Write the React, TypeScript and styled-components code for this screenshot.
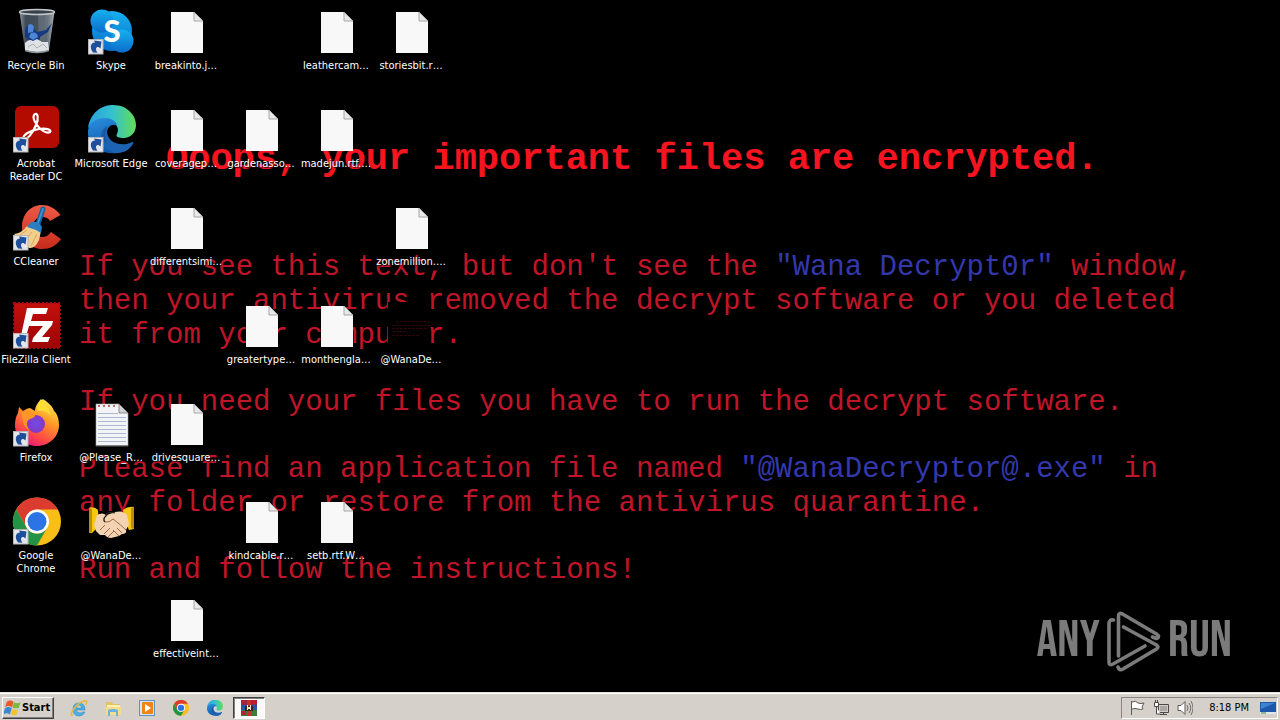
import React from "react";
import styled, { createGlobalStyle, css } from "styled-components";

const UI_FONT = `Tahoma, "DejaVu Sans Condensed", "DejaVu Sans", sans-serif`;
const FACE = "#d5d0c9";

const GlobalStyle = createGlobalStyle`
  * { box-sizing: border-box; }
  body { margin: 0; background: #000; font-family: ${UI_FONT}; }
  button { font: inherit; color: inherit; padding: 0; margin: 0; border: 0; background: none; }
`;

const Screen = styled.div`
  display: flex;
  flex-direction: column;
  min-height: 100vh;
  background: #000;
`;

const Desktop = styled.main`
  flex: 1;
  display: grid;
  grid-template-columns: minmax(0, 1fr);
  overflow: hidden;

  & > * { grid-area: 1 / 1; }
`;

const Wallpaper = styled.article`
  display: flex;
  flex-direction: column;
  gap: 33px;
  padding: 136px 0 0 79px;
  font-family: "Courier New", "Liberation Mono", monospace;
  white-space: nowrap;
`;

const Headline = styled.h1`
  margin: 0;
  padding: 0 0 36px 87px;
  font-size: 37px;
  line-height: 46px;
  font-weight: 700;
  color: #f5141f;
`;

const Paragraph = styled.p`
  margin: 0;
  font-size: 29px;
  line-height: 34px;
  color: #c01528;
`;

const Quoted = styled.span`
  color: #3338ac;
`;

const IconGrid = styled.section`
  z-index: 1;
  display: grid;
  grid-template-columns: repeat(6, 74px);
  grid-auto-rows: 84px;
  gap: 14px 1px;
  padding-top: 8px;
  align-content: start;
`;

const IconTile = styled.button<{ $col: number; $row: number }>`
  grid-column: ${(p) => p.$col};
  grid-row: ${(p) => p.$row};
  display: flex;
  flex-direction: column;
  align-items: center;
  align-self: start;
  gap: 3px;

  svg { display: block; overflow: visible; }
`;

const IconLabel = styled.span`
  padding-right: 2px;
  font-size: 11px;
  line-height: 13px;
  color: #fff;
  white-space: pre;
  text-align: center;
  text-shadow: 1px 1px 1px #000;
`;

const Watermark = styled.div`
  justify-self: end;
  align-self: end;
  display: flex;
  align-items: center;
  gap: 6px;
  padding: 0 48px 20px 0;
  color: #7b7b7b;
  font-family: "Bebas Neue", "Roboto Condensed", "Open Sans Condensed", "DejaVu Sans Condensed", sans-serif;
  font-size: 52px;
  line-height: 62px;
`;

const Taskbar = styled.footer`
  display: flex;
  align-items: center;
  height: 28px;
  padding: 2px 2px 0 2px;
  background: ${FACE};
  border-top: 1px solid #e4e0da;
  box-shadow: inset 0 1px 0 #fff;
`;

const StartButton = styled.button`
  && {
    display: flex;
    align-items: center;
    gap: 1px;
    width: 52px;
    height: 22px;
    padding-left: 1px;
    border: 1px solid;
    border-color: #fff #404040 #404040 #fff;
    box-shadow: inset -1px -1px 0 #808080;
    background: ${FACE};
    color: #000;
    font-size: 11px;
    font-weight: 700;
  }
`;

const QuickLaunch = styled.nav`
  display: flex;
  gap: 2px;
  margin-left: 9px;
`;

const TaskButton = styled.button<{ $active?: boolean }>`
  && {
    display: grid;
    place-items: center;
    width: 32px;
    height: 22px;
    ${(p) =>
      p.$active &&
      css`
        background: #fbfaf9;
        border: 1px solid;
        border-color: #404040 #fff #fff #404040;
        box-shadow: inset 1px 1px 0 #808080;
      `}
  }
`;

const Tray = styled.div`
  display: flex;
  align-items: center;
  gap: 8px;
  height: 22px;
  margin-left: auto;
  padding: 0 1px 0 7px;
  border: 1px solid;
  border-color: #8a867f #fff #fff #8a867f;
`;

const TrayButton = styled.button`
  display: block;
  svg { display: block; }
`;

const Clock = styled.time`
  padding: 0 3px 0 8px;
  font-size: 11px;
  line-height: 14px;
  color: #000;
  white-space: nowrap;
`;

const Art = ({ children, size = 48, box = 48 }: { children: React.ReactNode; size?: number; box?: number }) => (
  <svg width={size} height={size} viewBox={`0 0 ${box} ${box}`} aria-hidden="true">
    {children}
  </svg>
);

const Shortcut = () => (
  <g>
    <rect x="0.500" y="31.500" width="14.500" height="14.500" fill="#e6e6ea" stroke="#b5b5ba" strokeWidth="1" />
    <path d="M5 44.500C1 39 3 34.500 7 34.500L6 32.500l7.500 1-1 7-2-1.500C8 38.500 7 41 9.500 44.800Z" fill="#1d4f9c" />
  </g>
);

const RecycleBin = () => (
  <Art>
    <defs>
      <linearGradient id="glass">
        <stop offset="0" stopColor="#8d959c" />
        <stop offset=".18" stopColor="#3d4955" />
        <stop offset=".7" stopColor="#46535f" />
        <stop offset="1" stopColor="#aab0b5" />
      </linearGradient>
    </defs>
    <path d="M6.500 4h35L36 42q-11.500 4-24 0Z" fill="url(#glass)" />
    <path d="M25 6h10l-4 35h-5Z" fill="#77828c" opacity=".5" />
    <path d="M12 22c2-7 8-7 9-1l3 3 9-2 6-7-4 9-8 5c1 5-8 9-12 2l-3-2Z" fill="#153a80" />
    <path d="M15 17q4-3 6 2l-1 5-5 1Zm3 8q6-2 7 4l-5 3-4-3Z" fill="#4d86d6" />
    <path d="M12 35q4-5 8-2l4-2 5 3 6 0 1 8q-11.500 4-24 0Z" fill="#dfe2e4" />
    <path d="m15 39 5-3 4 4 6-4 4 4" fill="none" stroke="#a9afb4" />
    <ellipse cx="24" cy="4" rx="17.500" ry="2.500" fill="#39424a" stroke="#c4c9cd" strokeWidth="1.500" />
    <path d="M12 42.500q12 4 24 0" fill="none" stroke="#8f969c" strokeWidth="1.500" />
  </Art>
);

const Skype = () => (
  <Art>
    <defs>
      <linearGradient id="sky" x2="0" y2="1">
        <stop offset="0" stopColor="#16b1ef" />
        <stop offset="1" stopColor="#0b6dcb" />
      </linearGradient>
    </defs>
    <g fill="url(#sky)">
      <circle cx="24" cy="23" r="20" />
      <circle cx="14" cy="13" r="11.500" />
      <circle cx="34" cy="33" r="11.500" />
    </g>
    <text x="24" y="34" textAnchor="middle" fontFamily="Lato, sans-serif" fontWeight="900" fontSize="31" fill="#fff">S</text>
    <Shortcut />
  </Art>
);

const Acrobat = () => (
  <Art>
    <rect x="2" y="0" width="44" height="42" rx="6" fill="#b30b00" />
    <path d="M21 9c4-4 5 4 2 10C20 27 14 34 11 33c-3-3 6-9 15-10 8-1 13 1 11 3-3 2-10-2-13-7-3-4-4-8-3-10Z" fill="none" stroke="#fff" strokeWidth="2.200" strokeLinejoin="round" />
    <Shortcut />
  </Art>
);

const EdgeArt = ({ id }: { id: string }) => (
  <>
    <defs>
      <linearGradient id={`${id}top`}>
        <stop offset="0" stopColor="#2a9ee0" />
        <stop offset=".5" stopColor="#34c2cf" />
        <stop offset="1" stopColor="#62dc58" />
      </linearGradient>
      <linearGradient id={`${id}side`} x2=".4" y2="1">
        <stop offset="0" stopColor="#2b8fe0" />
        <stop offset="1" stopColor="#1058a8" />
      </linearGradient>
    </defs>
    <path d="M0 22C3 4 16-1 25-1c15 0 23 11 23 20 0 8-6 13-12 13-5 0-9-1-7-4 3-6-1-12-9-12C11 15 4 17 0 22Z" fill={`url(#${id}top)`} />
    <path d="M0 25C1 15 10 12 17 12c7 0 12 4 12 8-4-3-10 0-10 7 0 11 12 19 22 15l2-1C38 46 31 48 23 47 10 47-1 37 0 25Z" fill={`url(#${id}side)`} />
    <path d="M19 20c-6 5-6 23 8 27 8 0 13-2 18-9 1-2 0-2-1-2-9 5-24 2-25-10Z" fill="#1d63b4" />
    <path d="M20 20c-5 5-3 13 0 18-9-5-9-14 0-18Z" fill="#14488e" opacity=".5" />
  </>
);

const CCleaner = () => (
  <Art>
    <defs>
      <linearGradient id="cc" x2="0" y2="1">
        <stop offset="0" stopColor="#ec5b45" />
        <stop offset="1" stopColor="#c62b1c" />
      </linearGradient>
    </defs>
    <path d="M47.500 11C42 4 36 1 29 1 17 1 9 11 9 23c0 13 9 22 20 22 8 0 14-3 19-10l-10-7c-2 3-5 5-9 5-5 0-9-4-9-10s4-10 9-10c4 0 6 1 8 4Z" fill="url(#cc)" />
    <path d="m30 5-5 15" stroke="#14609f" strokeWidth="5" strokeLinecap="round" />
    <path d="m30 5-5 14" stroke="#3b93d4" strokeWidth="2" strokeLinecap="round" />
    <path d="M14 22 28 27 26 36q-4 9-10 8L1 30q8-1 13-8Z" fill="#f3cf8e" />
    <path d="m14 26-7 5m12-3-7 9m12-7-6 12" stroke="#d9a557" />
    <path d="M18 18q8-1 11 5l-1 6q-6-4-14-6Z" fill="#2a7dc0" />
    <Shortcut />
  </Art>
);

const FileZilla = () => (
  <Art>
    <defs>
      <linearGradient id="fz" x2="0" y2="1">
        <stop offset="0" stopColor="#c4100c" />
        <stop offset="1" stopColor="#9c0505" />
      </linearGradient>
    </defs>
    <rect x="1" y="1" width="46" height="45" fill="url(#fz)" stroke="#a30a0a" strokeWidth="2" strokeDasharray="2 2" />
    <path d="M14 6h21l-2 6H20l-2 7h11l-2 5H16l-4 14H7Z" fill="#fff" />
    <path d="M24 19h16l-1 4-10 12h8l-2 5H19l1-4 10-12h-7Z" fill="#fff" />
    <Shortcut />
  </Art>
);

const Firefox = () => (
  <Art>
    <defs>
      <linearGradient id="ff" x1=".8" y1="0" x2=".3" y2="1">
        <stop offset="0" stopColor="#fff04a" />
        <stop offset=".4" stopColor="#ff9a28" />
        <stop offset=".75" stopColor="#ff4a45" />
        <stop offset="1" stopColor="#e3157c" />
      </linearGradient>
      <radialGradient id="ffp">
        <stop offset="0" stopColor="#6b4fe8" />
        <stop offset="1" stopColor="#8a35c0" />
      </radialGradient>
    </defs>
    <path d="M30-1c6 4 10 8 11 12 3 2 5 8 5 14 0 12-10 21-22 21C11 46 2 37 2 25c0-5 1-9 3-12l1-6 4 4q4-3 7-3l5 3c0-5 3-9 8-12Z" fill="url(#ff)" />
    <circle cx="23" cy="24" r="9" fill="url(#ffp)" />
    <path d="M9 12c5-1 10 0 13 2 1 2-1 4-5 5-5 2-4 9 1 12-7-2-9-10-9-19Z" fill="#ff9529" />
    <path d="M28-1c4 6 9 10 10 17-3-5-8-6-13-5-2-4 0-9 3-12Z" fill="#ffdd37" />
    <Shortcut />
  </Art>
);

const ChromeArt = () => (
  <>
    <circle cx="24" cy="23.500" r="24" fill="#f9be17" />
    <path d="M3.200 11.500A24 24 0 0 1 44.800 11.500H24A12 12 0 0 0 13.600 29.500Z" fill="#dc3c30" />
    <path d="M3.200 11.500A24 24 0 0 0 24 47.500L34.400 29.500A12 12 0 0 1 13.600 29.500Z" fill="#259346" />
    <circle cx="24" cy="23.500" r="12" fill="#fff" />
    <circle cx="24" cy="23.500" r="9.500" fill="#2c74e6" />
  </>
);

const FileIcon = () => (
  <Art>
    <path d="M8 4h23l9 9v32H8Z" fill="#f8f8f8" />
    <path d="M31 4v9h9Z" fill="#e8e8e8" stroke="#a6a6a6" strokeWidth="1" />
  </Art>
);

const TextFile = () => (
  <Art>
    <path d="M8 4h23l9 9v33H8Z" fill="#f2f4f6" stroke="#a5a9ad" strokeWidth=".6" />
    <path d="M10 13.500h20M10 17.500h28M10 21.500h28M10 25.500h28M10 29.500h28M10 33.500h28M10 37.500h28M10 41.500h28" stroke="#a9bad0" />
    <path d="M10 6h20" stroke="#c06a6a" strokeWidth="2" strokeDasharray="2 3" />
    <path d="M31 4v9h9Z" fill="#d0d2d4" stroke="#77797b" strokeWidth=".8" />
    <path d="M8 45.500h32" stroke="#7d8184" />
  </Art>
);

const Handshake = () => (
  <Art>
    <path d="M1 10q5-2 9 2l1 16-7 7H1Z" fill="#f4c80f" />
    <path d="M46 9q-6-1-11 3l2 12 4 8 5-1Z" fill="#f4c80f" />
    <path d="M1 10v25l3-1V11Zm45-1v22l-3-1V10Z" fill="#b98d05" />
    <path d="M9 17q5-3 10 0l8-3q8-2 12 3l2 9-3 6q1 4-4 4l-3 2-4 1-4 1q-4 0-6-3l-5 0-4-4-2-6Z" fill="#f3d3b1" />
    <path d="M19 17q-5 4-2 7 4 1 8-3 8 6 13 11M12 32l5-5m-1 9 6-6m-2 9 6-6M29 30l5 5m-9-3 6 6" fill="none" stroke="#9a6d4d" strokeWidth="1" />
    <path d="M17 17q4-4 10-2m-8 2q-5 4-2 7" fill="none" stroke="#2e241c" strokeWidth="1.200" />
  </Art>
);

const BitmapThumb = () => (
  <Art>
    <rect width="42" height="48" fill="#000" />
    <path d="M8 19.500h33M4 23.500h38M4 26.500h36M4 29.500h14M4 33.500h27" stroke="#30050a" strokeWidth="1" strokeDasharray="3 1" />
  </Art>
);

const WindowsFlag = () => (
  <Art size={17} box={18}>
    <path d="M3 3q4-3 7 0L8.500 9q-4-3-7.500 0Z" fill="#e8582a" />
    <path d="M10.500 3.500q3 2 7 0l-2 6q-3 1-6.500-.5Z" fill="#7cb83a" />
    <path d="M1 10q4-3 7.200 0l-2 6.500q-3-3-7 0Z" fill="#3c86d8" />
    <path d="M9 10.500q3 2 6 .5l-2 6q-3 1-6-1Z" fill="#f6c22c" />
  </Art>
);

const InternetExplorer = () => (
  <Art size={18} box={18}>
    <path d="M15 11H6q1 3 4 3 2 0 3-1h2q-2 4-6 4-6 0-6-7 0-6 6-6t6 7ZM6 9h6q-1-3-3-3T6 9Z" fill="#4ab1e6" stroke="#2280bd" strokeWidth=".5" />
    <path d="M3 16q-3 1-1-3Q6 5 14 2q4-1 2 4" fill="none" stroke="#e7b93a" strokeWidth="1.500" />
  </Art>
);

const Explorer = () => (
  <Art size={18} box={18}>
    <path d="M2 3h6l1 2h7v11H2Z" fill="#e5c260" />
    <path d="M3 6h13v3H3Z" fill="#fbf0b8" />
    <path d="M2 8h15v8H2Z" fill="#f5dc85" />
    <path d="M4 17v-6q5-2 10 0v6h-2v-4H6v4Z" fill="#6bb3dc" />
  </Art>
);

const MediaPlayer = () => (
  <Art size={18} box={18}>
    <rect x="1.500" y="1.500" width="15" height="15" fill="#cfe5f6" stroke="#5a94c8" />
    <rect x="4" y="3" width="11" height="12" rx="1" fill="#f08316" />
    <path d="m7 5 6 4-6 4Z" fill="#fff" />
  </Art>
);

const WinRar = () => (
  <Art size={16} box={16}>
    <path d="M0 0h16v5H0Z" fill="#8d2a5c" />
    <path d="M0 5h16v5H0Z" fill="#2c52a8" />
    <path d="M0 10h16v6H0Z" fill="#3a7d3a" />
    <path d="M0 0h5v4H0Zm11 0h5v4h-5ZM0 11h5v4H0Z" fill="#b5213a" />
    <path d="M6 0h4v16H6Z" fill="#c4322c" />
    <path d="M4 6h8v5H4Z" fill="#30271e" />
    <path d="M6 5h1v5H6Zm3 0h1v5H9ZM7 7h2v2H7Z" fill="#f2e9c8" />
  </Art>
);

const FlagIcon = () => (
  <Art size={16} box={16}>
    <path d="M2.500 1v14M3 2q4-2 6 1 3 1 6 0l-2 4 1 2q-3 1-5 0-3-1-6 0" fill="#fff" stroke="#5c5a56" />
  </Art>
);

const NetworkIcon = () => (
  <Art size={16} box={16}>
    <path d="M5.500 4.500h10v8h-10Z" fill="#cfcdca" stroke="#4c4a47" />
    <path d="M7 6h7v5H7Z" fill="#a9a7a4" />
    <path d="M7 14.500h7M10.500 13v2" stroke="#4c4a47" />
    <path d="M1.500 2.500h4v4h-4ZM2.500 0v2m2-2v2m-1 5v7h4" fill="#fff" stroke="#4c4a47" />
  </Art>
);

const SpeakerIcon = () => (
  <Art size={16} box={16}>
    <path d="M1 5.500h3l4-4v13l-4-4H1Z" fill="#fff" stroke="#5c5a56" />
    <path d="M10 5q2 3 0 6m2-8q3.500 5 0 10m2-12q4 7 0 14" fill="none" stroke="#6e6c68" />
  </Art>
);

const ShowDesktopIcon = () => (
  <Art size={16} box={16}>
    <path d="M0 2h16v10H0Z" fill="#1d57ab" />
    <path d="M1 3h14l-14 6Z" fill="#3f82d2" />
    <path d="M0 12h16v2H0Z" fill="#dfe6ee" />
    <path d="M1 13h5" stroke="#3b8a3b" />
  </Art>
);

const AnyRunMark = () => (
  <svg width="56" height="62" viewBox="0 0 56 62" aria-hidden="true">
    <g fill="none" stroke="#7b7b7b" strokeWidth="3.600" strokeLinecap="round" strokeLinejoin="round">
      <path d="M7.500 10Q3 9 3 14v38q0 4 4 2l32-18" />
      <path d="M12.500 46V6q0-4 4-2l34 20q4 3 0 4.500l-4-1.500" />
      <path d="m17.500 17 33 18q3 2 0 4L17 59q-4 2-5-2" />
    </g>
  </svg>
);

type Entry = { col: number; row: number; label: string; art?: React.ReactNode };

const entries: Entry[] = [
  { col: 1, row: 1, label: "Recycle Bin", art: <RecycleBin /> },
  { col: 1, row: 2, label: "Acrobat\nReader DC", art: <Acrobat /> },
  { col: 1, row: 3, label: "CCleaner", art: <CCleaner /> },
  { col: 1, row: 4, label: "FileZilla Client", art: <FileZilla /> },
  { col: 1, row: 5, label: "Firefox", art: <Firefox /> },
  { col: 1, row: 6, label: "Google\nChrome", art: <Art><ChromeArt /><Shortcut /></Art> },
  { col: 2, row: 1, label: "Skype", art: <Skype /> },
  { col: 2, row: 2, label: "Microsoft Edge", art: <Art><EdgeArt id="edge" /><Shortcut /></Art> },
  { col: 2, row: 5, label: "@Please_R…", art: <TextFile /> },
  { col: 2, row: 6, label: "@WanaDe…", art: <Handshake /> },
  { col: 3, row: 1, label: "breakinto.j…" },
  { col: 3, row: 2, label: "coveragep…" },
  { col: 3, row: 3, label: "differentsimi…" },
  { col: 3, row: 5, label: "drivesquare…" },
  { col: 3, row: 7, label: "effectiveint…" },
  { col: 4, row: 2, label: "gardenasso…" },
  { col: 4, row: 4, label: "greatertype…" },
  { col: 4, row: 6, label: "kindcable.r…" },
  { col: 5, row: 1, label: "leathercam…" },
  { col: 5, row: 2, label: "madejun.rtf.…" },
  { col: 5, row: 4, label: "monthengla…" },
  { col: 5, row: 6, label: "setb.rtf.W…" },
  { col: 6, row: 1, label: "storiesbit.r…" },
  { col: 6, row: 3, label: "zonemillion.…" },
  { col: 6, row: 4, label: "@WanaDe…", art: <BitmapThumb /> },
];

export default function App() {
  return (
    <Screen>
      <GlobalStyle />
      <Desktop>
        <Wallpaper>
          <Headline>Ooops, your important files are encrypted.</Headline>
          <Paragraph>
            If you see this text, but don't see the <Quoted>"Wana Decrypt0r"</Quoted> window,
            <br />
            then your antivirus removed the decrypt software or you deleted
            <br />
            it from your computer.
          </Paragraph>
          <Paragraph>If you need your files you have to run the decrypt software.</Paragraph>
          <Paragraph>
            Please find an application file named <Quoted>"@WanaDecryptor@.exe"</Quoted> in
            <br />
            any folder or restore from the antivirus quarantine.
          </Paragraph>
          <Paragraph>Run and follow the instructions!</Paragraph>
        </Wallpaper>
        <IconGrid aria-label="Desktop icons">
          {entries.map((e) => (
            <IconTile key={`${e.col}-${e.row}`} type="button" $col={e.col} $row={e.row}>
              {e.art ?? <FileIcon />}
              <IconLabel>{e.label}</IconLabel>
            </IconTile>
          ))}
        </IconGrid>
        <Watermark>
          <span>ANY</span>
          <AnyRunMark />
          <span>RUN</span>
        </Watermark>
      </Desktop>
      <Taskbar>
        <StartButton type="button">
          <WindowsFlag />
          Start
        </StartButton>
        <QuickLaunch aria-label="Pinned programs">
          <TaskButton type="button" aria-label="Internet Explorer"><InternetExplorer /></TaskButton>
          <TaskButton type="button" aria-label="Windows Explorer"><Explorer /></TaskButton>
          <TaskButton type="button" aria-label="Media Player"><MediaPlayer /></TaskButton>
          <TaskButton type="button" aria-label="Google Chrome"><Art size={16}><ChromeArt /></Art></TaskButton>
          <TaskButton type="button" aria-label="Microsoft Edge"><Art size={16}><EdgeArt id="mini" /></Art></TaskButton>
          <TaskButton type="button" aria-label="WinRAR" $active><WinRar /></TaskButton>
        </QuickLaunch>
        <Tray>
          <TrayButton type="button" aria-label="Action Center"><FlagIcon /></TrayButton>
          <TrayButton type="button" aria-label="Network"><NetworkIcon /></TrayButton>
          <TrayButton type="button" aria-label="Volume"><SpeakerIcon /></TrayButton>
          <Clock dateTime="20:18">8:18 PM</Clock>
          <TrayButton type="button" aria-label="Show desktop"><ShowDesktopIcon /></TrayButton>
        </Tray>
      </Taskbar>
    </Screen>
  );
}
